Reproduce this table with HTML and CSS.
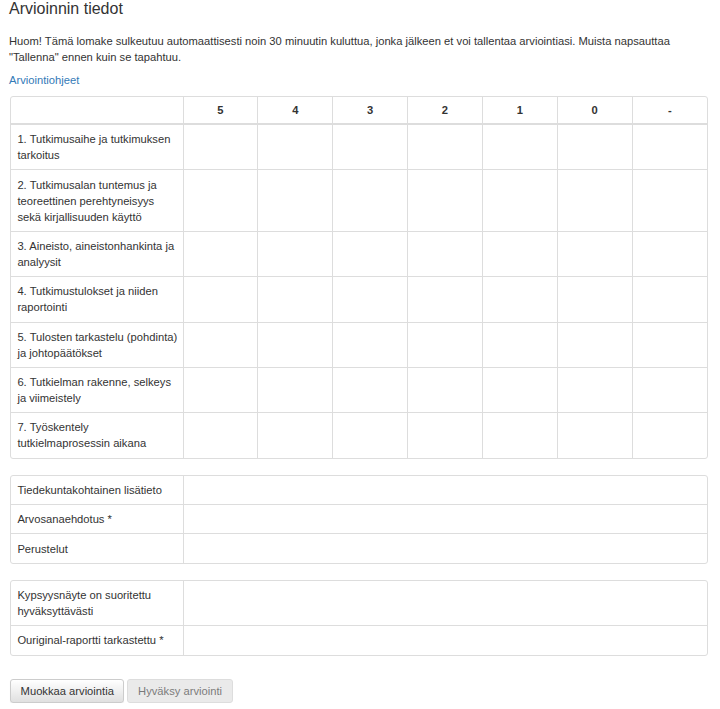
FILE: index.html
```html
<!DOCTYPE html>
<html lang="fi">
<head>
<meta charset="utf-8">
<title>Arvioinnin tiedot</title>
<link rel="stylesheet" href="styles.css">
</head>
<body>
<div class="page">
  <h3 class="title">Arvioinnin tiedot</h3>
  <p class="note">Huom! Tämä lomake sulkeutuu automaattisesti noin 30 minuutin kuluttua, jonka jälkeen et voi tallentaa arviointiasi. Muista napsauttaa "Tallenna" ennen kuin se tapahtuu.</p>
  <p class="guide"><a href="#" class="link">Arviointiohjeet</a></p>

  <div class="panel">
    <table class="grid">
      <colgroup><col class="label-col"><col><col><col><col><col><col><col></colgroup>
      <thead>
        <tr><th></th><th>5</th><th>4</th><th>3</th><th>2</th><th>1</th><th>0</th><th>-</th></tr>
      </thead>
      <tbody>
        <tr><td>1. Tutkimusaihe ja tutkimuksen tarkoitus</td><td></td><td></td><td></td><td></td><td></td><td></td><td></td></tr>
        <tr><td>2. Tutkimusalan tuntemus ja teoreettinen perehtyneisyys sekä kirjallisuuden käyttö</td><td></td><td></td><td></td><td></td><td></td><td></td><td></td></tr>
        <tr><td>3. Aineisto, aineistonhankinta ja analyysit</td><td></td><td></td><td></td><td></td><td></td><td></td><td></td></tr>
        <tr><td>4. Tutkimustulokset ja niiden raportointi</td><td></td><td></td><td></td><td></td><td></td><td></td><td></td></tr>
        <tr><td>5. Tulosten tarkastelu (pohdinta) ja johtopäätökset</td><td></td><td></td><td></td><td></td><td></td><td></td><td></td></tr>
        <tr><td>6. Tutkielman rakenne, selkeys ja viimeistely</td><td></td><td></td><td></td><td></td><td></td><td></td><td></td></tr>
        <tr><td>7. Työskentely tutkielmaprosessin aikana</td><td></td><td></td><td></td><td></td><td></td><td></td><td></td></tr>
      </tbody>
    </table>
  </div>

  <div class="panel">
    <table class="grid">
      <colgroup><col class="label-col"><col></colgroup>
      <tbody>
        <tr><td>Tiedekuntakohtainen lisätieto</td><td></td></tr>
        <tr><td>Arvosanaehdotus *</td><td></td></tr>
        <tr><td>Perustelut</td><td></td></tr>
      </tbody>
    </table>
  </div>

  <div class="panel">
    <table class="grid">
      <colgroup><col class="label-col"><col></colgroup>
      <tbody>
        <tr><td>Kypsyysnäyte on suoritettu hyväksyttävästi</td><td></td></tr>
        <tr><td>Ouriginal-raportti tarkastettu *</td><td></td></tr>
      </tbody>
    </table>
  </div>

  <div class="actions">
    <button class="btn">Muokkaa arviointia</button>
    <button class="btn" disabled>Hyväksy arviointi</button>
  </div>
</div>
</body>
</html>
```

FILE: styles.css
```css
html, body {
  margin: 0;
  padding: 0;
  background: #fff;
}

body {
  font-family: "Liberation Sans", Arial, sans-serif;
  font-size: 11.2px;
  line-height: 16px;
  color: #333;
}

.page {
  padding: 0 12px 0 9px;
}

.title {
  margin: 0;
  font-size: 16px;
  line-height: 18px;
  font-weight: normal;
  color: #333;
}

.note {
  margin: 15px 0 7px 0;
}

.guide {
  margin: 0 0 8px 0;
}

.link {
  color: #337ab7;
  text-decoration: none;
}

.panel {
  margin-left: 1px;
  border: 1px solid #ddd;
  border-radius: 3px;
  overflow: hidden;
  margin-bottom: 16px;
}

.grid {
  width: 100%;
  border-collapse: collapse;
  table-layout: fixed;
}

.label-col {
  width: 172px;
}

.grid th,
.grid td {
  padding: 6.2px 6.4px;
  border-left: 1px solid #ddd;
  border-top: 1px solid #ddd;
  vertical-align: top;
  text-align: left;
}

.grid td:first-child {
  padding-right: 2px;
}

.grid th {
  padding: 5px 6.4px;
  text-align: center;
  font-weight: bold;
  border-top: none;
  border-bottom: 2px solid #ddd;
}

.grid tr > :first-child {
  border-left: none;
}

.grid tbody tr:first-child td {
  border-top: none;
}

.actions {
  margin-top: 23px;
  margin-left: 1px;
  display: flex;
  gap: 3px;
}

.btn {
  font-family: inherit;
  font-size: 11.2px;
  line-height: 16px;
  color: #333;
  padding: 3px 9.6px;
  border: 1px solid #ccc;
  border-radius: 3px;
  background: linear-gradient(to bottom, #fff 0%, #e0e0e0 100%);
  box-shadow: inset 0 1px 0 rgba(255, 255, 255, .15), 0 1px 1px rgba(0, 0, 0, .075);
  cursor: pointer;
}

.btn:disabled {
  opacity: .65;
  cursor: not-allowed;
  box-shadow: none;
  background: #e0e0e0;
}
```
